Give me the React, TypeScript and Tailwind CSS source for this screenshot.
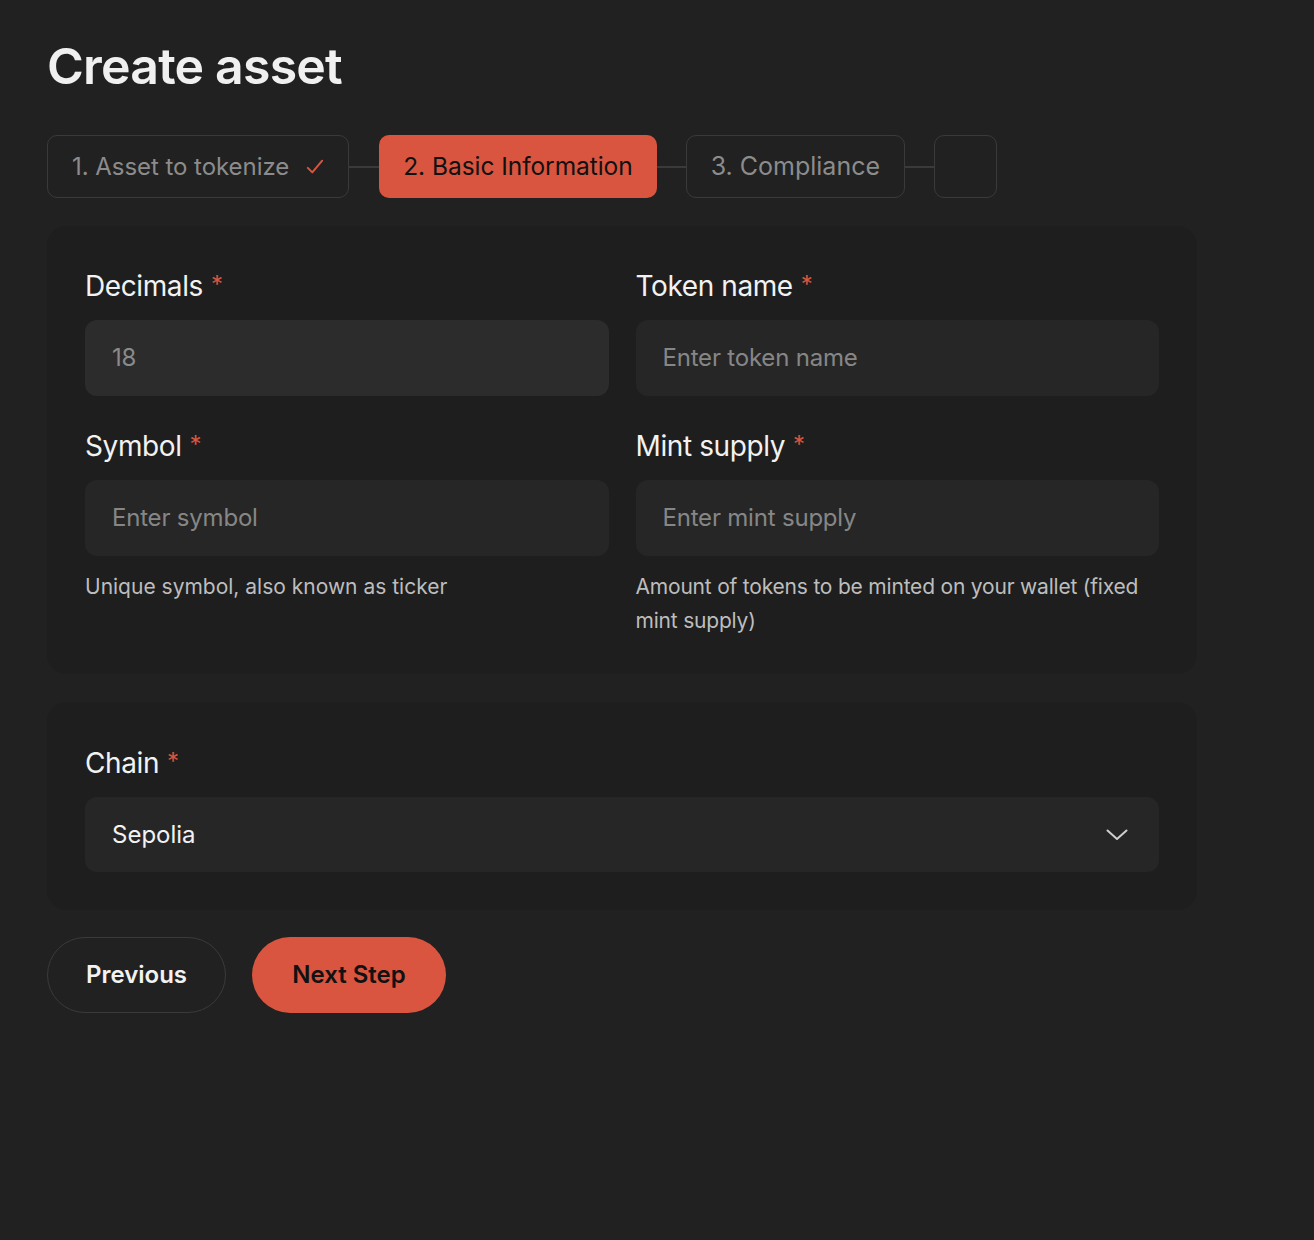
import React from "react";

const font = { fontFamily: "Inter, 'Noto Sans', sans-serif" };

function Label({ children }: { children: React.ReactNode }) {
  return (
    <div className="h-[40px] leading-[40px] text-[28px] text-[#f2f2f2] mb-[14px] tracking-[-0.4px]">
      {children}
      <span className="text-[#d9553f] ml-[8px] relative -top-[3px] text-[24px]">*</span>
    </div>
  );
}

function Input({ placeholder, value, disabled }: { placeholder?: string; value?: string; disabled?: boolean }) {
  return (
    <div
      className={
        "h-[76px] rounded-[12px] flex items-center px-[27px] text-[24px] tracking-[-0.2px] " +
        (disabled ? "bg-[#2c2c2c] text-[#8a8a8a]" : "bg-[#262626] text-[#868686]")
      }
    >
      {value ?? placeholder}
    </div>
  );
}

export default function App() {
  return (
    <div className="min-h-[1240px] w-full bg-[#212121] pl-[47px] pt-[36px]" style={font}>
      <h1 className="text-[50px] leading-[60px] font-semibold text-[#f0f0f0] tracking-[-0.8px] mb-[39px]">Create asset</h1>

      <div className="flex items-center">
        <div className="h-[63px] px-[24px] rounded-[10px] border border-[#3a3a3a] flex items-center text-[24px] tracking-[-0.05px] text-[#8c8c8c] gap-[17px]">
          1. Asset to tokenize
          <svg width="18" height="18" viewBox="0 0 20 20" fill="none">
            <path d="M2 11 L7 16 L18 3" stroke="#d9553f" strokeWidth="2.2" strokeLinecap="round" strokeLinejoin="round" />
          </svg>
        </div>
        <div className="w-[30px] h-[2px] bg-[#3a3a3a]" />
        <div className="h-[63px] px-[24px] rounded-[10px] bg-[#d9553f] flex items-center text-[24.5px] tracking-[-0.05px] text-[#111111]">
          2. Basic Information
        </div>
        <div className="w-[29px] h-[2px] bg-[#3a3a3a]" />
        <div className="h-[63px] px-[24px] rounded-[10px] border border-[#3a3a3a] flex items-center text-[25px] tracking-[0px] text-[#8c8c8c]">
          3. Compliance
        </div>
        <div className="w-[29px] h-[2px] bg-[#3a3a3a]" />
        <div className="h-[63px] w-[63px] rounded-[10px] border border-[#3a3a3a]" />
      </div>

      <div className="w-[1150px] mt-[28px] rounded-[20px] bg-[#1e1e1e] px-[38px] pt-[40px] pb-[36px]">
        <div className="grid grid-cols-2 gap-x-[27px]">
          <div>
            <Label>Decimals</Label>
            <Input value="18" disabled />
          </div>
          <div>
            <Label>Token name</Label>
            <Input placeholder="Enter token name" />
          </div>
          <div className="mt-[30px]">
            <Label>Symbol</Label>
            <Input placeholder="Enter symbol" />
            <p className="mt-[14px] text-[21px] leading-[34px] text-[#bdbdbd]">Unique symbol, also known as ticker</p>
          </div>
          <div className="mt-[30px]">
            <Label>Mint supply</Label>
            <Input placeholder="Enter mint supply" />
            <p className="mt-[14px] text-[21px] leading-[34px] tracking-[-0.2px] text-[#bdbdbd]">
              Amount of tokens to be minted on your wallet (fixed mint supply)
            </p>
          </div>
        </div>
      </div>

      <div className="w-[1150px] mt-[28px] rounded-[20px] bg-[#1e1e1e] px-[38px] pt-[41px] pb-[38px]">
        <Label>Chain</Label>
        <div className="h-[75px] rounded-[12px] bg-[#262626] flex items-center justify-between px-[27px] pr-[31px] text-[24px] text-[#f2f2f2]">
          Sepolia
          <svg width="22" height="12" viewBox="0 0 22 12" fill="none">
            <path d="M1.5 1.5 L11 10 L20.5 1.5" stroke="#cfcfcf" strokeWidth="2" strokeLinecap="round" strokeLinejoin="round" />
          </svg>
        </div>
      </div>

      <div className="flex gap-[26px] mt-[27px]">
        <button className="h-[76px] w-[179px] rounded-full border border-[#3a3a3a] text-[24px] font-semibold text-[#f2f2f2]">
          Previous
        </button>
        <button className="h-[76px] w-[194px] rounded-full bg-[#d9553f] text-[24px] font-semibold text-[#111111]">
          Next Step
        </button>
      </div>
    </div>
  );
}
